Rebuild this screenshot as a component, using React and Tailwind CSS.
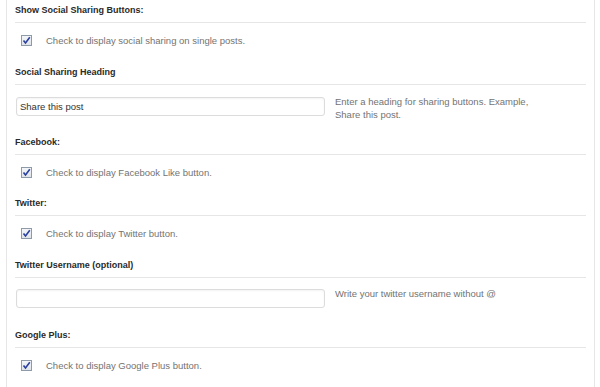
import React from 'react';

function CheckBox() {
  return (
    <span className="w-[11px] h-[11px] border border-[#8f9aa8] bg-gradient-to-b from-[#f4f6f9] to-[#dfe4ea] flex items-center justify-center shrink-0">
      <svg width="9" height="9" viewBox="0 0 9 9">
        <path d="M1.5 4.5 L3.5 7 L7.8 1.2" fill="none" stroke="#2a3f9e" strokeWidth="1.6" />
      </svg>
    </span>
  );
}

function Heading({ children }) {
  return (
    <div className="pt-[4px] pb-[5px] leading-[13px] text-[9px] font-bold text-[#2a2a2a] border-b border-[#e6e6e6]">
      {children}
    </div>
  );
}

function CheckSection({ title, label, mb }) {
  return (
    <div className={mb}>
      <Heading>{title}</Heading>
      <label className="mt-[11px] h-[13px] flex items-center pl-[6px]">
        <CheckBox />
        <span className="ml-[14px] text-[9.5px] leading-[13px] text-[#737373]">{label}</span>
      </label>
    </div>
  );
}

function InputSection({ title, value, help, mb, mt }) {
  return (
    <div className={mb}>
      <Heading>{title}</Heading>
      <div className={`flex items-start ${mt}`}>
        <input
          type="text"
          defaultValue={value}
          className="mt-[2px] ml-[1px] w-[309px] h-[19px] px-[3px] border border-[#dcdcdc] rounded-[3px] shadow-[inset_0_1px_2px_rgba(0,0,0,0.05)] text-[9.5px] text-[#333] outline-none"
        />
        <p className="ml-[10px] w-[220px] text-[9.5px] leading-[13px] text-[#737373]">{help}</p>
      </div>
    </div>
  );
}

export default function App() {
  return (
    <div className="bg-white w-[600px] h-[387px] overflow-hidden" style={{ fontFamily: '"Liberation Sans", Arial, sans-serif' }}>
      <div className="ml-[6px] w-[589px] h-full border-l border-r border-[#e6e6e6] px-[8px]">
        <CheckSection
          title="Show Social Sharing Buttons:"
          label="Check to display social sharing on single posts."
          mb="mb-[15px]"
        />
        <InputSection
          title="Social Sharing Heading"
          value="Share this post"
          help="Enter a heading for sharing buttons. Example, Share this post."
          mt="mt-[10px]"
          mb="mb-[11px]"
        />
        <CheckSection title="Facebook:" label="Check to display Facebook Like button." mb="mb-[14px]" />
        <CheckSection title="Twitter:" label="Check to display Twitter button." mb="mb-[15px]" />
        <InputSection
          title="Twitter Username (optional)"
          value=""
          help="Write your twitter username without @"
          mt="mt-[9px]"
          mb="mb-[17px]"
        />
        <CheckSection title="Google Plus:" label="Check to display Google Plus button." mb="mb-[14px]" />
      </div>
    </div>
  );
}
